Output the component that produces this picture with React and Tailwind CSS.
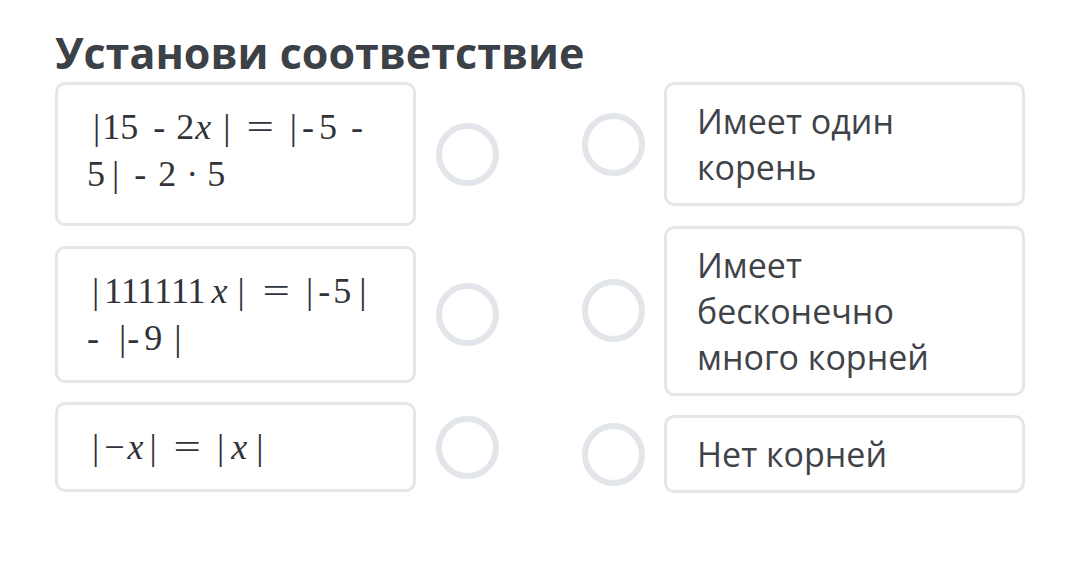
export default function App() {
  const math = { fontFamily: '"Liberation Serif", "DejaVu Serif", serif' };
  const Circle = () => (
    <div className="w-[63px] h-[63px] shrink-0 rounded-full border-[6px] border-[#e2e5e9] bg-white" />
  );
  const LeftCard = ({ h, children }) => (
    <div className="flex items-center gap-[20px]">
      <div
        className={`w-[361px] ${h} shrink-0 rounded-[10px] border-[3px] border-[#e4e6e9] bg-white pl-[29px] pt-[19px] text-[36px] leading-[47px] text-[#303338]`}
        style={math}
      >
        {children}
      </div>
      <Circle />
    </div>
  );
  const RightCard = ({ children }) => (
    <div className="flex items-center gap-[19px]">
      <Circle />
      <div className="w-[361px] shrink-0 rounded-[10px] border-[3px] border-[#e4e6e9] bg-white pl-[30px] pr-[25px] pt-[13px] pb-[13px] text-[34px] leading-[46px] text-[#3f4347]">
        {children}
      </div>
    </div>
  );
  const Eq = ({ cls }) => <span className={cls}>=</span>;
  return (
    <div
      className="w-[1080px] h-[561px] bg-white pl-[55px] pt-[26px]"
      style={{ fontFamily: '"Open Sans", "Noto Sans", sans-serif' }}
    >
      <h1 className="text-[43px] font-bold leading-[54px] text-[#3c4047]">Установи соответствие</h1>
      <div className="mt-[2px] flex">
        <div className="flex flex-col gap-[19.5px]">
          <LeftCard h="h-[144px]">
            <div className="whitespace-nowrap">
              <span className="ml-[6px]">|</span>
              <span className="ml-[2px]">15</span>
              <span className="ml-[15px]">-</span>
              <span className="ml-[11px]">2</span>
              <span className="ml-[1px] italic">x</span>
              <span className="ml-[12px]">|</span>
              <Eq cls="ml-[20px] inline-block scale-x-[1.35]" />
              <span className="ml-[19px]">|</span>
              <span className="ml-[5px]">-</span>
              <span className="ml-[5px]">5</span>
              <span className="ml-[14px]">-</span>
            </div>
            <div className="whitespace-nowrap">
              <span>5</span>
              <span className="ml-[7px]">|</span>
              <span className="ml-[15px]">-</span>
              <span className="ml-[12px]">2</span>
              <span className="ml-[10px]">·</span>
              <span className="ml-[9px]">5</span>
            </div>
          </LeftCard>
          <LeftCard h="h-[137px]">
            <div className="whitespace-nowrap">
              <span className="ml-[5px]">|</span>
              <span className="ml-[5px]">111111</span>
              <span className="ml-[6px] italic">x</span>
              <span className="ml-[10px]">|</span>
              <Eq cls="ml-[21px] inline-block scale-x-[1.35]" />
              <span className="ml-[20px]">|</span>
              <span className="ml-[5px]">-</span>
              <span className="ml-[3px]">5</span>
              <span className="ml-[8px]">|</span>
            </div>
            <div className="whitespace-nowrap">
              <span>-</span>
              <span className="ml-[20px]">|</span>
              <span className="ml-[1px]">-</span>
              <span className="ml-[5px]">9</span>
              <span className="ml-[12px]">|</span>
            </div>
          </LeftCard>
          <LeftCard h="h-[90px]">
            <div className="whitespace-nowrap">
              <span className="ml-[5px]">|</span>
              <span className="ml-[5px]">−</span>
              <span className="ml-[3px] italic">x</span>
              <span className="ml-[6px]">|</span>
              <Eq cls="ml-[20px] inline-block scale-x-[1.35]" />
              <span className="ml-[20px]">|</span>
              <span className="ml-[7px] italic">x</span>
              <span className="ml-[9px]">|</span>
            </div>
          </LeftCard>
        </div>
        <div className="ml-[83px] flex flex-col gap-[19.5px]">
          <RightCard>Имеет один корень</RightCard>
          <RightCard>Имеет бесконечно много корней</RightCard>
          <RightCard>Нет корней</RightCard>
        </div>
      </div>
    </div>
  );
}
